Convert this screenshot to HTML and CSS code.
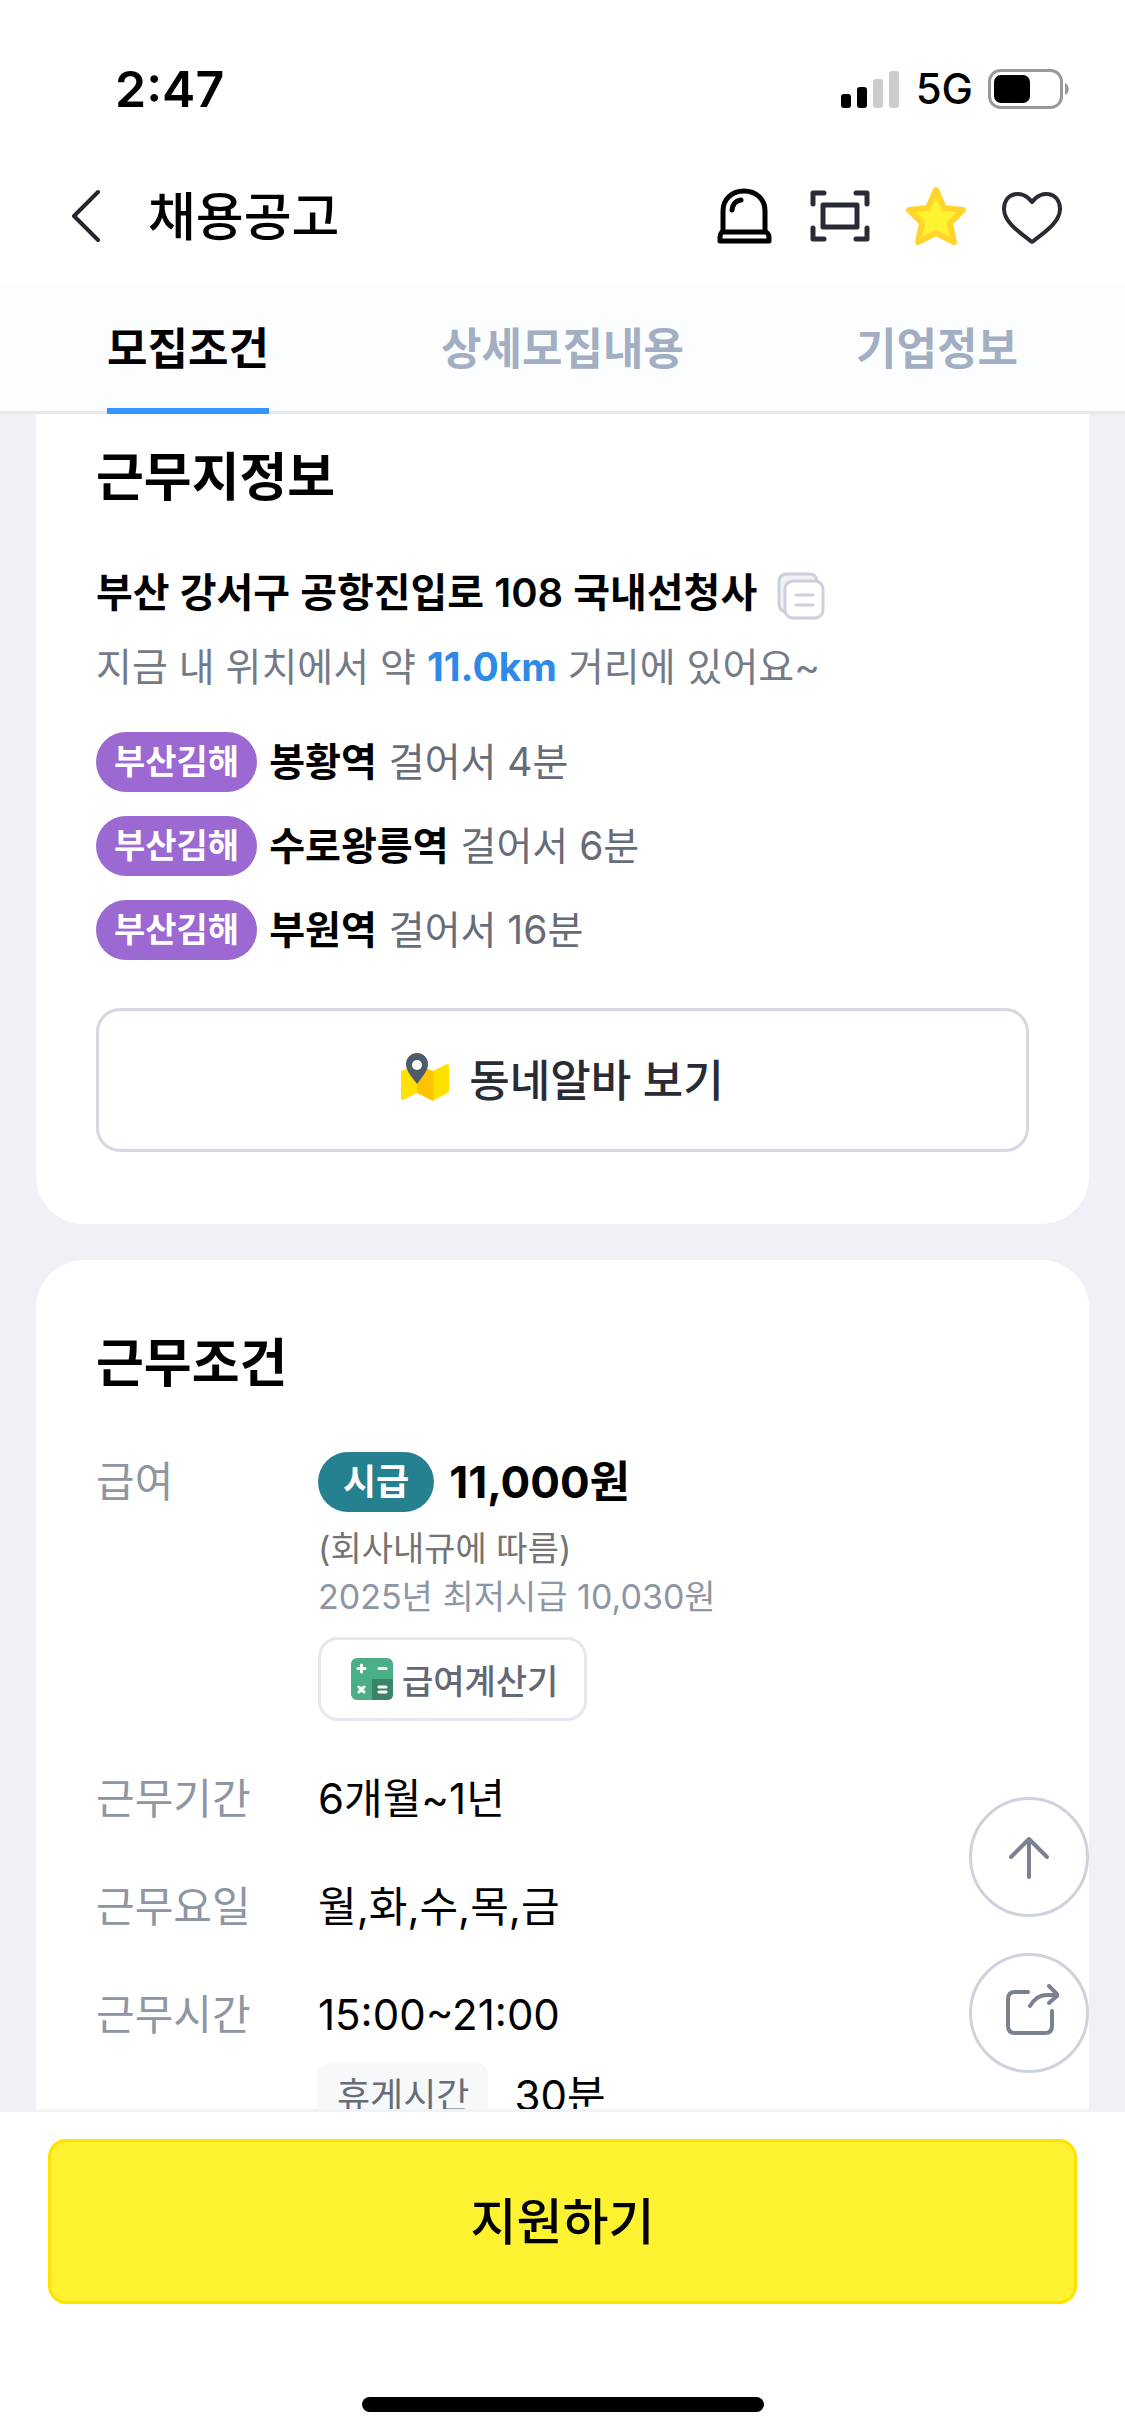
FILE: index.html
```html
<!DOCTYPE html>
<html lang="ko">
<head>
    <meta charset="UTF-8">
    <meta name="viewport" content="width=device-width, initial-scale=1.0">
    <title>채용공고</title>
    <link rel="stylesheet" href="styles.css">
</head>
<body>
    <div class="status-bar">
        <span class="time">2:47</span>
        <div class="status-icons">
            <svg width="60" height="38" viewBox="0 0 60 38">
                <rect x="0" y="24" width="10" height="14" rx="3" fill="#000"/>
                <rect x="16" y="17" width="10" height="21" rx="3" fill="#000"/>
                <rect x="32" y="9" width="10" height="29" rx="3" fill="#ccc"/>
                <rect x="48" y="1" width="10" height="37" rx="3" fill="#ccc"/>
            </svg>
            <span class="network">5G</span>
            <svg width="82" height="40" viewBox="0 0 82 40">
                <rect x="1.5" y="1.5" width="72" height="37" rx="11" fill="none" stroke="#999" stroke-width="3"/>
                <rect x="6" y="6" width="36" height="28" rx="7" fill="#000"/>
                <path d="M77 14c5 2 5 10 0 12z" fill="#999"/>
            </svg>
        </div>
    </div>

    <header class="header">
        <button class="icon-btn" aria-label="뒤로">
            <svg width="30" height="56" viewBox="0 0 30 56" fill="none" stroke="#23262d" stroke-width="4" stroke-linecap="round" stroke-linejoin="round">
                <path d="M28 4L4 28L28 52"/>
            </svg>
        </button>
        <h1 class="header-title">채용공고</h1>
        <div class="header-actions">
            <button class="icon-btn" aria-label="알림">
                <svg width="60" height="60" viewBox="0 0 60 60" fill="none" stroke="#000" stroke-width="5" stroke-linecap="round" stroke-linejoin="round">
                    <path d="M9 45V25C9 13 18 5 30 5s21 8 21 20v20"/>
                    <path d="M8 46h44q3 2 3 5v4H6v-4q0-3 2-5z"/>
                    <path d="M18 24q1-9 9-10"/>
                </svg>
            </button>
            <button class="icon-btn" aria-label="전체화면">
                <svg width="60" height="60" viewBox="0 0 60 60" fill="none" stroke="#292c35" stroke-width="5" stroke-linecap="round" stroke-linejoin="round">
                    <path d="M3 18V7h11M46 7h11v11M57 42v11H46M14 53H3V42"/>
                    <rect x="13" y="19" width="34" height="22"/>
                </svg>
            </button>
            <button class="icon-btn" aria-label="스크랩">
                <svg width="60" height="60" viewBox="0 0 60 60" overflow="visible">
                    <path d="M30 4L38 22L57 24L44 37L48 56L30 47L12 56L16 37L3 24L22 22Z" fill="#fff230" stroke="#ffd52b" stroke-width="6" stroke-linejoin="round"/>
                </svg>
            </button>
            <button class="icon-btn" aria-label="관심">
                <svg width="60" height="60" viewBox="0 0 60 60" fill="none" stroke="#292c35" stroke-width="4" stroke-linejoin="round">
                    <path d="M30 16C21 3 2 6 2 23c0 13 15 23 28 33c13-10 28-20 28-33C58 6 39 3 30 16z"/>
                </svg>
            </button>
        </div>
    </header>

    <nav class="tabs">
        <a class="tab active" href="#location">모집조건</a>
        <a class="tab" href="#detail">상세모집내용</a>
        <a class="tab" href="#company">기업정보</a>
    </nav>

    <div class="content">
        <main class="scroll-area">
            <section class="card card-location" id="location">
                <h2 class="card-title">근무지정보</h2>
                <div class="address">
                    <strong>부산 강서구 공항진입로 108 국내선청사</strong>
                    <button class="icon-btn" aria-label="주소 복사">
                        <svg width="48" height="54" viewBox="0 0 48 54" stroke="#cdd0da" stroke-width="3" stroke-linecap="round">
                            <path d="M8 46q-6-2-6-9V16q0-8 8-8h22q7 0 8 7" fill="#f1f2f6"/>
                            <rect x="8" y="15" width="38" height="37" rx="8" fill="#fff"/>
                            <path d="M19 29h17M19 39h17"/>
                        </svg>
                    </button>
                </div>
                <p class="distance">지금 내 위치에서 약 <b>11.0km</b> 거리에 있어요~</p>
                <ul class="stations">
                    <li><span class="badge badge-line">부산김해</span><strong>봉황역</strong><span>걸어서 4분</span></li>
                    <li><span class="badge badge-line">부산김해</span><strong>수로왕릉역</strong><span>걸어서 6분</span></li>
                    <li><span class="badge badge-line">부산김해</span><strong>부원역</strong><span>걸어서 16분</span></li>
                </ul>
                <button class="map-btn">
                    <svg width="48" height="50" viewBox="0 0 48 50">
                        <path d="M0 18L16 12V40L2 47Q0 47 0 45z" fill="#ffe100"/>
                        <path d="M16 12L32 18V48L16 40z" fill="#ffc400"/>
                        <path d="M32 18L46 11Q48 11 48 13V39L32 48z" fill="#ffe100"/>
                        <path d="M16 31C9 22 5 17 5 11a11 11 0 0 1 22 0c0 6-4 11-11 20z" fill="#4d5b6b"/>
                        <circle cx="16" cy="12" r="5" fill="#fff"/>
                    </svg>
                    동네알바 보기
                </button>
            </section>

            <section class="card" id="condition">
                <h2 class="card-title">근무조건</h2>
                <dl class="conditions">
                    <dt>급여</dt>
                    <dd>
                        <div class="pay"><span class="badge badge-pay">시급</span><strong>11,000원</strong></div>
                        <p class="note">(회사내규에 따름)</p>
                        <p class="note note-min">2025년 최저시급 10,030원</p>
                        <button class="calc-btn">
                            <svg width="42" height="42" viewBox="0 0 42 42" fill="none" stroke="#fff" stroke-width="3" stroke-linecap="round">
                                <rect width="42" height="42" rx="6" fill="#4aae87" stroke="none"/>
                                <path d="M21 21h21v15q0 6-6 6H21z" fill="#3c8468" stroke="none"/>
                                <path d="M10.500 7v7M7 10.500h7M28 10.500h7M8 29l5 5M13 29l-5 5M28 29h7M28 34h7"/>
                            </svg>
                            급여계산기
                        </button>
                    </dd>
                    <dt>근무기간</dt>
                    <dd>6개월~1년</dd>
                    <dt>근무요일</dt>
                    <dd>월,화,수,목,금</dd>
                    <dt>근무시간</dt>
                    <dd>
                        15:00~21:00
                        <div class="break"><span class="break-label">휴게시간</span>30분</div>
                    </dd>
                </dl>
            </section>
        </main>

        <div class="floating">
            <button class="float-btn" aria-label="맨 위로">
                <svg width="60" height="60" viewBox="0 0 60 60" fill="none" stroke="#7b8190" stroke-width="4" stroke-linecap="round" stroke-linejoin="round">
                    <path d="M30 50V12M12 30L30 12L48 30"/>
                </svg>
            </button>
            <button class="float-btn" aria-label="공유하기">
                <svg width="60" height="60" viewBox="0 0 60 60" fill="none" stroke="#7b8190" stroke-width="4" stroke-linecap="round" stroke-linejoin="round">
                    <path d="M29 9H16q-7 0-7 7v27q0 7 7 7h30q7 0 7-7V28"/>
                    <path d="M31 23Q38 11 49 12h10M50 3l9 9l-9 8"/>
                </svg>
            </button>
        </div>
    </div>

    <footer class="apply-bar">
        <button class="apply-btn">지원하기</button>
        <div class="home-indicator"></div>
    </footer>
</body>
</html>
```
FILE: styles.css
```css
:root {
    --bg-color: #f0f1f6;
    --text-color: #000000;
    --sub-color: #666c78;
    --label-color: #8e95a3;
    --line-color: #d5d8e0;
    --yellow: #fff230;
    --blue: #3396ff;
}

* {
    box-sizing: border-box;
}

body {
    font-family: Inter, "Noto Sans CJK KR", sans-serif;
    color: var(--text-color);
    background-color: #ffffff;
    margin: 0;
    display: flex;
    flex-direction: column;
    height: 100vh;
}

h1, h2, p, ul, dl, dd {
    margin: 0;
    padding: 0;
}

button {
    font-family: inherit;
    color: inherit;
    border: none;
    background: none;
    padding: 0;
    cursor: pointer;
}

svg {
    display: block;
    flex-shrink: 0;
}

.status-bar {
    display: flex;
    justify-content: space-between;
    align-items: center;
    padding: 59px 55px 0 115px;
    line-height: 60px;
}

.time {
    font-size: 50px;
    font-weight: 600;
}

.status-icons {
    display: flex;
    align-items: center;
    gap: 15px;
}

.network {
    font-size: 42px;
    font-weight: 500;
}

.header {
    display: flex;
    align-items: center;
    padding: 48px 63px 18px 70px;
    height: 163px;
}

.header-title {
    margin-left: 48px;
    padding-top: 4px;
    font-size: 52px;
    font-weight: 500;
    line-height: 60px;
}

.header-actions {
    display: flex;
    gap: 36px;
    margin-left: auto;
}

.tabs {
    display: flex;
    justify-content: space-between;
    padding: 0 107px;
    background-color: #fbfdff;
    border-bottom: 3px solid #e7e9ed;
}

.tab {
    margin-bottom: -3px;
    padding: 40px 0 32px;
    border-bottom: 6px solid transparent;
    font-size: 44px;
    font-weight: 700;
    line-height: 54px;
    color: #a3aec2;
    text-decoration: none;
}

.tab.active {
    color: var(--text-color);
    border-bottom-color: var(--blue);
}

.content {
    position: relative;
    flex: 1;
    min-height: 0;
}

.scroll-area {
    height: 100%;
    padding: 0 36px;
    background-color: var(--bg-color);
    overflow-y: auto;
    scrollbar-width: none;
}

.card {
    padding: 74px 60px 72px;
    margin-bottom: 36px;
    border-radius: 48px;
    background-color: #ffffff;
}

.card-location {
    padding-top: 34px;
    border-radius: 0 0 48px 48px;
}

.card-title {
    font-size: 52px;
    font-weight: 700;
    line-height: 60px;
}

.address {
    display: flex;
    align-items: center;
    gap: 20px;
    margin-top: 58px;
    font-size: 40px;
    line-height: 54px;
}

.address strong {
    font-weight: 600;
}

.distance {
    margin-top: 20px;
    font-size: 39px;
    line-height: 54px;
    color: #747b87;
}

.distance b {
    color: #2e8ae6;
}

.stations {
    display: flex;
    flex-direction: column;
    gap: 24px;
    margin-top: 38px;
    list-style: none;
    font-size: 39px;
    line-height: 60px;
    color: var(--sub-color);
}

.stations li {
    display: flex;
    align-items: center;
    gap: 12px;
}

.stations strong {
    color: var(--text-color);
}

.badge {
    border-radius: 30px;
    color: #ffffff;
    font-weight: 700;
    line-height: 60px;
}

.badge-line {
    padding: 0 18px;
    font-size: 34px;
    background-color: #9b69d1;
}

.badge-pay {
    padding: 0 25px;
    font-size: 36px;
    background-color: #258090;
}

.map-btn {
    display: flex;
    justify-content: center;
    align-items: center;
    gap: 20px;
    width: 100%;
    height: 144px;
    margin-top: 48px;
    padding-bottom: 4px;
    border: 3px solid var(--line-color);
    border-radius: 24px;
    font-size: 44px;
    font-weight: 500;
    color: #292c35;
}

.conditions {
    display: grid;
    grid-template-columns: 222px 1fr;
    row-gap: 48px;
    margin-top: 58px;
    font-size: 42px;
    line-height: 60px;
}

.conditions dt {
    color: var(--label-color);
}

.pay {
    display: flex;
    align-items: center;
    gap: 15px;
    font-size: 44px;
}

.note {
    margin-top: 13px;
    font-size: 34px;
    line-height: 48px;
    color: #747474;
}

.note-min {
    margin-top: 0;
    color: var(--label-color);
}

.calc-btn {
    display: flex;
    align-items: center;
    gap: 9px;
    height: 84px;
    margin-top: 16px;
    padding: 0 26px 0 30px;
    border: 3px solid #e5e8ed;
    border-radius: 20px;
    font-size: 34px;
    font-weight: 500;
    color: #636874;
}

.break {
    display: flex;
    align-items: center;
    gap: 26px;
    margin-top: 18px;
}

.break-label {
    padding: 3px 19px;
    border-radius: 12px;
    font-size: 36px;
    background-color: #f7f8fa;
    color: var(--sub-color);
}

.floating {
    position: absolute;
    right: 36px;
    bottom: 36px;
    display: flex;
    flex-direction: column;
    gap: 36px;
}

.float-btn {
    display: flex;
    justify-content: center;
    align-items: center;
    width: 120px;
    height: 120px;
    border: 3px solid #cdd2dc;
    border-radius: 50%;
    background-color: #ffffff;
}

.apply-bar {
    padding: 27px 48px 24px;
    border-top: 3px solid #f0f3f8;
    background-color: #ffffff;
}

.apply-btn {
    display: block;
    width: 100%;
    height: 165px;
    padding-bottom: 8px;
    border: 3px solid #ffe200;
    border-radius: 18px;
    background-color: var(--yellow);
    font-size: 50px;
    font-weight: 500;
}

.home-indicator {
    width: 402px;
    height: 15px;
    margin: 93px auto 0;
    border-radius: 8px;
    background-color: #000000;
}
```
